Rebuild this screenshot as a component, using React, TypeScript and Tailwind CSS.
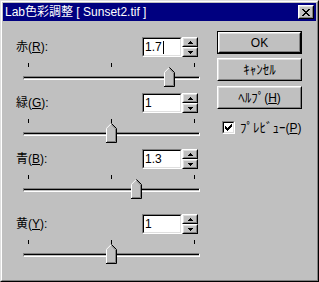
const font = { fontFamily: '"Liberation Sans", "Noto Sans CJK JP", sans-serif' };

const rows = [
  { label: "赤", key: "R", text: "1.7", v: 1.7, cursor: true, gap: "mt-0" },
  { label: "緑", key: "G", text: "1", v: 1, cursor: false, gap: "mt-[13px]" },
  { label: "青", key: "B", text: "1.3", v: 1.3, cursor: false, gap: "mt-[13px]" },
  { label: "黄", key: "Y", text: "1", v: 1, cursor: false, gap: "mt-[22px]" },
];

function Raised({ children, className = "" }: { children?: React.ReactNode; className?: string }) {
  return (
    <div className={"border border-t-white border-l-white border-r-black border-b-black " + className}>
      <div className="w-full h-full border border-t-[#dfdfdf] border-l-[#dfdfdf] border-r-[#808080] border-b-[#808080] bg-[#c0c0c0] flex items-center justify-center">
        {children}
      </div>
    </div>
  );
}

function Arrow({ up }: { up?: boolean }) {
  return (
    <svg width="5" height="3" viewBox="0 0 5 3" shapeRendering="crispEdges">
      {up ? <polygon points="2.5,0 5,3 0,3" fill="#000" /> : <polygon points="0,0 5,0 2.5,3" fill="#000" />}
    </svg>
  );
}

function Thumb() {
  return (
    <svg width="11" height="20" viewBox="0 0 11 20">
      <polygon points="0,5 5,0 10,5 10,20 0,20" fill="#c0c0c0" />
      <polyline points="0.5,19.5 0.5,5.3 5.2,0.6" fill="none" stroke="#fff" strokeWidth="1" />
      <polyline points="5.4,0.4 10.5,5.5 10.5,19.5 0,19.5" fill="none" stroke="#000" strokeWidth="1" />
      <polyline points="5.4,1.8 9.5,5.9 9.5,18.5 1,18.5" fill="none" stroke="#808080" strokeWidth="1" />
    </svg>
  );
}

function SliderRow({ r }: { r: (typeof rows)[number] }) {
  return (
    <div className={"flex flex-col " + r.gap}>
      <div className="flex items-center h-[20px]">
        <div className="flex-1 text-[12px] text-black leading-none">
          {r.label}(<span className="underline">{r.key}</span>):
        </div>
        <div className="flex h-[20px] mr-[2px]">
          <div className="w-[40px] h-[20px] border border-t-[#808080] border-l-[#808080] border-r-white border-b-white">
            <div className="w-full h-full border border-t-black border-l-black border-r-[#dfdfdf] border-b-[#dfdfdf] bg-white flex items-center pl-[1px] text-[12px] text-black leading-none">
              {r.text}
              {r.cursor && <span className="inline-block w-[1px] h-[13px] bg-black ml-[1px]" />}
            </div>
          </div>
          <div className="flex flex-col w-[16px]">
            <Raised className="w-[16px] h-[10px]">
              <Arrow up />
            </Raised>
            <Raised className="w-[16px] h-[10px]">
              <Arrow />
            </Raised>
          </div>
        </div>
      </div>
      <div className="flex gap-[82px] pl-[12px] mt-[6px] h-[4px]">
        <div className="w-[1px] h-[4px] bg-black" />
        <div className="w-[1px] h-[4px] bg-black" />
        <div className="w-[1px] h-[4px] bg-black" />
      </div>
      <div className="relative ml-[7px] mt-[9px] w-[177px] h-[4px] border border-t-[#808080] border-l-[#808080] border-r-white border-b-white">
        <div className="h-[1px] bg-black" />
        <div className="absolute top-[-10px]" style={{ left: Math.round(r.v * 83) - 1 }}>
          <Thumb />
        </div>
      </div>
    </div>
  );
}

export default function App() {
  return (
    <div className="w-[319px] h-[282px] border border-t-[#dfdfdf] border-l-[#dfdfdf] border-r-black border-b-black" style={font}>
      <div className="w-full h-full border border-t-white border-l-white border-r-[#808080] border-b-[#808080] bg-[#c0c0c0] p-[1px] flex flex-col">
        <div className="h-[18px] bg-[#000080] flex items-center pl-[2px] pr-[2px]">
          <div className="flex-1 text-white text-[12px] leading-none">Lab色彩調整 [ Sunset2.tif ]</div>
          <Raised className="w-[16px] h-[14px]">
            <svg width="8" height="7" viewBox="0 0 8 7" shapeRendering="crispEdges">
              <path d="M0 0h2v1h-2zM6 0h2v1h-2zM1 1h2v1h-2zM5 1h2v1h-2zM2 2h4v1h-4zM3 3h2v1h-2zM2 4h4v1h-4zM1 5h2v1h-2zM5 5h2v1h-2zM0 6h2v1h-2zM6 6h2v1h-2z" fill="#000" />
            </svg>
          </Raised>
        </div>
        <div className="flex flex-1">
          <div className="flex flex-col pl-[13px] pt-[16px] w-[197px]">
            {rows.map((r) => (
              <SliderRow key={r.key} r={r} />
            ))}
          </div>
          <div className="flex flex-col pl-[17px] pt-[10px]">
            <div className="w-[85px] h-[23px] border border-black">
              <Raised className="w-full h-full">
                <span className="text-[12px] text-black leading-none">OK</span>
              </Raised>
            </div>
            <Raised className="w-[85px] h-[23px] mt-[4px]">
              <span className="text-[13px] text-black leading-none">ｷｬﾝｾﾙ</span>
            </Raised>
            <Raised className="w-[85px] h-[23px] mt-[5px]">
              <span className="text-[12px] text-black leading-none">
                <span className="text-[13px]">ﾍﾙﾌﾟ</span>(<span className="underline">H</span>)
              </span>
            </Raised>
            <div className="flex items-center mt-[12px] pl-[5px]">
              <div className="w-[13px] h-[13px] border border-t-[#808080] border-l-[#808080] border-r-white border-b-white">
                <div className="w-full h-full border border-t-black border-l-black border-r-[#dfdfdf] border-b-[#dfdfdf] bg-white flex items-center justify-center">
                  <svg width="7" height="7" viewBox="0 0 7 7" shapeRendering="crispEdges">
                    <path d="M6 0h1v3h-1zM5 1h1v3h-1zM4 2h1v3h-1zM3 3h1v3h-1zM2 4h1v3h-1zM1 3h1v3h-1zM0 2h1v3h-1z" fill="#000" />
                  </svg>
                </div>
              </div>
              <span className="ml-[5px] text-[12px] text-black leading-none">
                <span className="text-[13px]">ﾌﾟﾚﾋﾞｭｰ</span>(<span className="underline">P</span>)
              </span>
            </div>
          </div>
        </div>
      </div>
    </div>
  );
}
